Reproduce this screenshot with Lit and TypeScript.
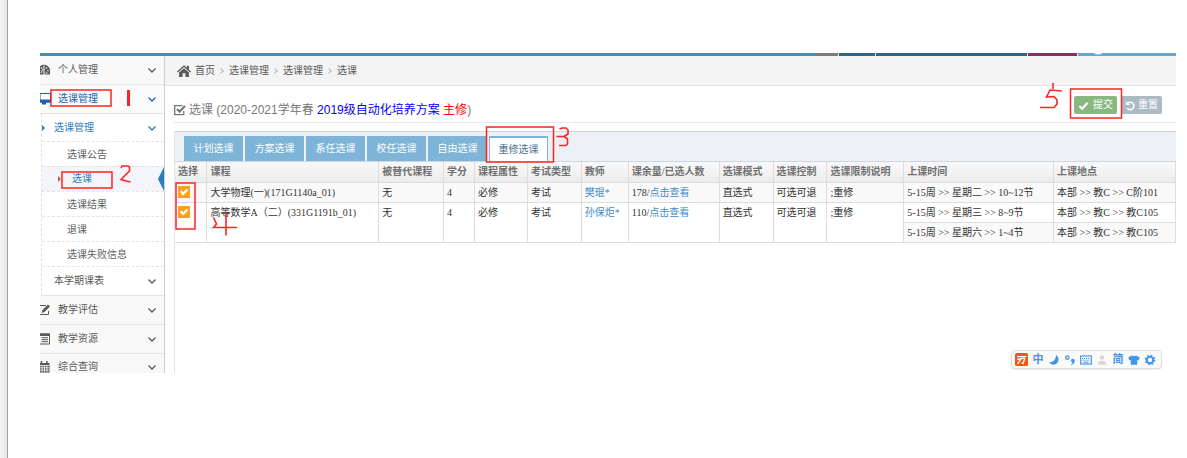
import { LitElement, html, svg, css } from "lit";
import { customElement, property, state } from "lit/decorators.js";
import { classMap } from "lit/directives/class-map.js";

const glyphs: Record<string, unknown> = {
  gauge: svg`<path d="M-2 10.500V6a6 6 0 0 1 12 1.500V10.500z" fill="currentColor"/><path d="M4 1.500V11" stroke="#f8f8f8" stroke-width="1"/><circle cx="6.500" cy="4" r=".8" fill="#f8f8f8"/><circle cx="8" cy="6.800" r=".8" fill="#f8f8f8"/><circle cx="1.500" cy="4" r=".8" fill="#f8f8f8"/><path d="M1 9 3 5" stroke="#f8f8f8"/><path d="M5.500 9h2" stroke="#f8f8f8"/>`,
  desktop: svg`<path d="M0 .5H10.500V9H0z" fill="#fff" stroke="currentColor"/><path d="M0 6.500H11V9.500H0zM2 9h4v2.500H2z" fill="currentColor"/>`,
  edit: svg`<path d="M0 1.500H6M0 10.500H8.500V7" fill="none" stroke="currentColor"/><path d="M1.500 9 2.500 6 8 .5 10 2.500 4.500 8z" fill="currentColor"/>`,
  list: svg`<path d="M0 1H9.500V11H0" fill="none" stroke="currentColor"/><path d="M0 .5H10V3H0z" fill="currentColor"/><path d="M1.500 4.700H8M1.500 6.700H8M1.500 8.700H8" stroke="currentColor"/>`,
  calendar: svg`<path d="M0 2H9.500V11.500H0z" fill="currentColor"/><path d="M0 4.500H9M0 6.800H9M0 9.100H9M2 4.500V11M4.500 4.500V11M7 4.500V11" stroke="#f8f8f8" stroke-width=".8"/><path d="M1.500 0V3.500M7 0V3.500" stroke="currentColor" stroke-width="1.500"/>`,
  down: svg`<path d="M2.500 4.500 6 8 9.500 4.500" fill="none" stroke="currentColor" stroke-width="1.300"/>`,
  home: svg`<path d="M0 6.500 6 1 8.500 3.300V1.500H10.200V4.800L12 6.500 11.200 7.300 6 2.600.8 7.300z" fill="currentColor"/><path d="M1.800 7.300 6 3.600 10.200 7.300V11.200H7.200V8H4.800V11.200H1.800z" fill="currentColor"/>`,
  checksq: svg`<path d="M9.800 7V10.600H.7V1.600H8.500" fill="none" stroke="currentColor" stroke-width="1.300"/><path d="M3 5 5.500 7.700 11 2" fill="none" stroke="currentColor" stroke-width="2.200"/>`,
  check: svg`<path d="M1.500 6.500 4.500 9.500 10.500 3" fill="none" stroke="currentColor" stroke-width="2.400"/>`,
  undo: svg`<path d="M3 3.500A4 4 0 1 1 2.500 9" fill="none" stroke="currentColor" stroke-width="1.700"/><path d="M1 1V5.500H5.500z" fill="currentColor"/>`,
  brand: svg`<rect width="12" height="12" rx="1.500" fill="#fb5412"/><path d="M2 3.300H10.500M2 6 9 4.500M5.500 5.500 2.500 10M9 4.800 7.500 9.800 6 9" fill="none" stroke="#fff" stroke-width="1.200"/>`,
  moon: svg`<path d="M8 1C8 5.500 5.500 8 1.200 8.500 3 11.200 7 11.400 9.200 9 11.400 6.500 10.800 3 8 1z" fill="currentColor"/>`,
  punct: svg`<circle cx="3.300" cy="3.500" r="1.700" fill="none" stroke="currentColor" stroke-width="1.300"/><path d="M6.800 6.500a1.900 1.900 0 1 1 3.900.5C10.500 9.200 9 10.500 7 11V9.900q1.500-.5 1.600-1.500Q7 8.300 6.800 6.500z" fill="currentColor"/>`,
  keyboard: svg`<rect x=".7" y="2" width="10.600" height="8" fill="none" stroke="currentColor" stroke-width="1.200"/><path d="M2 4.500h8M2.500 6.200h8" stroke="currentColor" stroke-dasharray="1.200 .8"/><path d="M3.500 8.200h5" stroke="currentColor"/>`,
  person: svg`<circle cx="6" cy="3.600" r="2.200" fill="#d5d5d5"/><path d="M1.700 10.800q0-4 4.300-4t4.300 4z" fill="#d5d5d5"/>`,
  shirt: svg`<path d="M4 1.500q2 1.500 4 0L11.800 3.500 10.500 6.500 9.200 6V10.800H2.800V6L1.500 6.500.2 3.500z" fill="currentColor"/>`,
  gear: svg`<circle cx="6" cy="6" r="3.200" fill="none" stroke="currentColor" stroke-width="2"/><circle cx="6" cy="6" r="4.500" fill="none" stroke="currentColor" stroke-width="1.600" stroke-dasharray="1.767 1.767"/>`,
};

const icon = (name: string, cls = "") =>
  html`<svg class="icon ${cls}" viewBox="0 0 12 12" aria-hidden="true">${glyphs[name]}</svg>`;

@customElement("side-menu")
class SideMenu extends LitElement {
  static styles = css`
    :host { display: block; border-right: 1px solid #ccc; background: #fff; color: #585858; }
    a { color: inherit; text-decoration: none; display: flex; align-items: center; }
    .label { flex: 1; white-space: nowrap; }
    .icon { width: 12px; height: 12px; flex: none; }
    .arrow { margin-right: 6px; }
    .top { height: 28px; background: #f8f8f8; border-bottom: 1px solid #e5e5e5; gap: 6px; }
    .open { color: #1963aa; background: #fafafa; }
    .last { box-sizing: border-box; height: 19px; padding-top: 7px; border: 0; align-items: flex-start; line-height: 12px; overflow: hidden; }
    .tree { margin-left: 1px; border-left: 1px dashed #d5e3ec; border-bottom: 1px solid #e5e5e5; }
    .sub { height: 27px; padding-left: 12px; }
    .current { color: #2b7dbc; }
    .leaf { box-sizing: border-box; height: 25px; padding: 2px 0 0 25px; border-top: 1px dashed #e4e4e4; color: #616161; }
    .sub.later { height: 28px; border-top: 1px dashed #e4e4e4; }
    .leaf.picked { background: #f3f5fa; color: #2b7dbc; padding: 0 0 0 16px; gap: 11px; }
    .mark { border: 3px solid transparent; border-left-color: #c86139; border-right: 0; }
    .flag { border: 12px solid transparent; border-right: 6px solid #2b7dbc; border-left: 0; }
    .node { width: 0; border: 3px solid transparent; border-left-color: #2b7dbc; border-right: 0; margin: 0 9px 0 -12px; }
  `;
  render() {
    const top = (name: string, text: string, cls = "") => html`
      <a href="#" class="top ${cls}">${icon(name)}<span class="label">${text}</span>${icon("down", "arrow")}</a>`;
    return html`<nav>
      ${top("gauge", "个人管理")} ${top("desktop", "选课管理", "open")}
      <div class="tree">
        <a href="#" class="sub current"><i class="node"></i><span class="label">选课管理</span>${icon("down", "arrow")}</a>
        <a href="#" class="leaf">选课公告</a>
        <a href="#" class="leaf picked"><i class="mark"></i><span class="label">选课</span><i class="flag"></i></a>
        <a href="#" class="leaf">选课结果</a>
        <a href="#" class="leaf">退课</a>
        <a href="#" class="leaf">选课失败信息</a>
        <a href="#" class="sub later"><span class="label">本学期课表</span>${icon("down", "arrow")}</a>
      </div>
      ${top("edit", "教学评估")} ${top("list", "教学资源")} ${top("calendar", "综合查询", "last")}
    </nav>`;
  }
}

interface Course {
  name: string; teacher: string; left: string;
  slots: [string, string][];
}

@customElement("course-table")
class CourseTable extends LitElement {
  static styles = css`
    :host { display: block; font-family: "Liberation Serif", "Noto Sans CJK SC", serif; color: #333; }
    table { width: 100%; table-layout: fixed; border-collapse: collapse; }
    th, td { border: 1px solid #ddd; padding: 2px 3px; height: 15px; line-height: 15px; text-align: left; vertical-align: top; white-space: nowrap; }
    th { border-top: 0; padding-bottom: 3px; color: #707070; background: linear-gradient(#f8f8f8, #ececec); font-weight: bold; }
    th:first-child, td.pick { border-left: 0; }
    .odd { background: #f9f9f9; }
    a { color: #428bca; text-decoration: none; }
    .pick input {
      appearance: none; display: block; width: 12px; height: 12px; margin: 1px 0 0;
      background: #f9a11b;
    }
    .pick input:checked::before {
      content: ""; display: block; width: 12px; height: 12px; background: #fff;
      clip-path: polygon(16% 50%, 30% 38%, 43% 52%, 72% 22%, 86% 36%, 43% 80%);
    }
  `;
  @property({ attribute: false }) courses: Course[] = [];
  private columns: [string, number][] = [
    ["选择", 32], ["课程", 172], ["被替代课程", 65], ["学分", 31], ["课程属性", 53],
    ["考试类型", 54], ["教师", 47], ["课余量/已选人数", 91], ["选课模式", 54],
    ["选课控制", 54], ["选课限制说明", 77], ["上课时间", 150], ["上课地点", 122],
  ];
  render() {
    const total = this.columns.reduce((n, c) => n + c[1], 0);
    return html`<table>
      <colgroup>${this.columns.map((c) => html`<col style="width:${(c[1] / total) * 100}%" />`)}</colgroup>
      <thead><tr>${this.columns.map((c) => html`<th scope="col">${c[0]}</th>`)}</tr></thead>
      <tbody>${this.courses.map((c, i) => {
        const n = c.slots.length;
        const odd = classMap({ odd: i % 2 === 0 });
        const cell = (v: unknown) => html`<td rowspan=${n}>${v}</td>`;
        return html`<tr class=${odd}>
            <td class="pick" rowspan=${n}><input type="checkbox" checked aria-label=${c.name} /></td>
            ${cell(c.name)}${cell("无")}${cell("4")}${cell("必修")}${cell("考试")}
            ${cell(html`<a href="#">${c.teacher}</a>`)}
            ${cell(html`${c.left}/<a href="#">点击查看</a>`)}
            ${cell("直选式")}${cell("可选可退")}${cell(";重修")}
            <td>${c.slots[0][0]}</td><td>${c.slots[0][1]}</td>
          </tr>
          ${c.slots.slice(1).map((s) => html`<tr class="odd"><td>${s[0]}</td><td>${s[1]}</td></tr>`)}`;
      })}</tbody>
    </table>`;
  }
}

@customElement("input-bar")
class InputBar extends LitElement {
  static styles = css`
    :host { display: flex; align-items: center; gap: 4px; height: 17px; padding: 0 5px 0 3px; background: #fafafa;
      border: 1px solid #ddd; border-radius: 4px; color: #3f96e6; box-shadow: 0 1px 1px #eee; }
    .icon { width: 12px; height: 12px; flex: none; }
    .logo { width: 13px; height: 13px; }
    .char { width: 12px; font-size: 11px; line-height: 17px; font-weight: bold; text-align: center; }
  `;
  render() {
    return html`${icon("brand", "logo")}<span class="char">中</span>${icon("moon")}${icon("punct")}${icon("keyboard")}
      ${icon("person")}<span class="char">简</span>${icon("shirt")}${icon("gear")}`;
  }
}

@customElement("app-root")
class AppRoot extends LitElement {
  static styles = css`
    :host { display: flex; position: relative; min-height: 100vh; background: #fff; overflow: hidden;
      font: 10px/14px "Liberation Sans", "Noto Sans CJK SC", sans-serif; color: #585858; }
    .edge { width: 7px; flex: none; background: linear-gradient(90deg, #f5f5f5, #e6e6e6); border-right: 1px solid #a0a0a0; }
    .page { flex: 1; min-width: 0; padding: 53px 11px 0 32px; }
    .icon { width: 12px; height: 12px; flex: none; }
    .strip { display: flex; justify-content: flex-end; gap: 1px; height: 3px; background: #438eb9; overflow: hidden; }
    .strip i { background: #2e6589; }
    .gray { width: 23px; }
    .s1 { width: 36px; box-shadow: 0 0 0 1px #d6e2ea; }
    .s2 { width: 151px; box-shadow: 0 0 0 1px #d6e2ea; }
    .s3 { width: 49px; box-shadow: 0 0 0 1px #d6e2ea; }
    .s4 { width: 98px; }
    .strip .gray { background: #7b7b7b; }
    .strip .s3 { background: #892e65; }
    .strip .s4 { background: radial-gradient(ellipse 5px 2px at 20px 0, #fff 40%, #62a8d1); }
    .frame { display: flex; position: relative; }
    side-menu { width: 124px; flex: none; }
    main { flex: 1; min-width: 0; display: flex; flex-direction: column; }
    .crumbs { display: flex; align-items: center; height: 29px; padding-left: 12px; background: #f4f4f4; border-bottom: 1px solid #e5e5e5; }
    .crumbs a { color: inherit; text-decoration: none; }
    .crumbs .home { width: 14px; height: 14px; margin-right: 4px; }
    .sep { width: 4px; height: 4px; margin: 0 6px 0 4px; border: solid #b2b6bf; border-width: 1px 1px 0 0; transform: rotate(45deg); box-sizing: border-box; }
    .head { display: flex; align-items: center; height: 36px; margin-left: 9px; border-bottom: 1px solid #e5e5e5; }
    h1 { flex: 1; display: flex; align-items: center; gap: 3px; margin: 0; padding-top: 12px; font-size: 12px; line-height: 18px; font-weight: normal; color: #777; white-space: nowrap; }
    .plan { color: #0000f5; }
    .major { color: #f00; }
    .actions { display: flex; gap: 4px; margin-right: 14px; padding-top: 2px; }
    button { font: inherit; border: 0; cursor: pointer; }
    .act { display: flex; align-items: center; gap: 4px; height: 18px; padding: 0 4px; color: #fff; border-radius: 2px; }
    .act .icon { width: 11px; height: 11px; }
    .save { background: #87b87f; }
    .reset { background: #abbac3; gap: 2px; }
    .panel { flex: 1; margin: 8px 0 0 9px; border-left: 1px solid #dde4ec; }
    .tabs { display: flex; gap: 2px; height: 25px; padding: 4px 0 0 9px; background: #edf1f6; border: solid #cdd7e3; border-width: 1px 0; }
    .tab { width: 59px; padding: 0; background: #7db4d8; color: #fff; }
    .tab.on { background: #fff; color: #4c6f8f; border: solid #7db4d8; border-width: 2px 1px 0; }
    input-bar { position: absolute; right: 14px; bottom: 4px; }
    .notes { position: absolute; left: 0; top: 0; width: 1187px; height: 458px; pointer-events: none; fill: none; stroke: #f22; stroke-width: 2; }
  `;
  @state() private active = 5;
  private tabs = ["计划选课", "方案选课", "系任选课", "校任选课", "自由选课", "重修选课"];
  private courses: Course[] = [
    { name: "大学物理(一)(171G1140a_01)", teacher: "樊琨*", left: "178",
      slots: [["5-15周 >> 星期二 >> 10~12节", "本部 >> 教C >> C阶101"]] },
    { name: "高等数学A（二）(331G1191b_01)", teacher: "孙保炬*", left: "110",
      slots: [["5-15周 >> 星期三 >> 8~9节", "本部 >> 教C >> 教C105"], ["5-15周 >> 星期六 >> 1~4节", "本部 >> 教C >> 教C105"]] },
  ];
  render() {
    return html`
      <div class="edge"></div>
      <div class="page">
        <div class="strip"><i class="gray"></i><i class="s1"></i><i class="s2"></i><i class="s3"></i><i class="s4"></i></div>
        <div class="frame">
          <side-menu></side-menu>
          <main>
            <nav class="crumbs">${icon("home", "home")}<a href="#">首页</a><i class="sep"></i><a href="#">选课管理</a><i class="sep"></i><a href="#">选课管理</a><i class="sep"></i><span>选课</span></nav>
            <div class="head">
              <h1>${icon("checksq")}<span>选课 (2020-2021学年春 <span class="plan">2019级自动化培养方案</span> <span class="major">主修</span>)</span></h1>
              <div class="actions">
                <button class="act save">${icon("check")}提交</button>
                <button class="act reset">${icon("undo")}重置</button>
              </div>
            </div>
            <section class="panel">
              <div class="tabs" role="tablist">${this.tabs.map((t, i) => html`
                <button role="tab" aria-selected=${i === this.active} class=${classMap({ tab: true, on: i === this.active })}
                  @click=${() => (this.active = i)}>${t}</button>`)}</div>
              <course-table .courses=${this.courses}></course-table>
            </section>
          </main>
          <input-bar></input-bar>
        </div>
      </div>
      <svg class="notes" viewBox="0 0 1187 458" aria-hidden="true">
        <g stroke-width="1.500">
          <rect x="51" y="90" width="60" height="16"/>
          <rect x="62" y="172" width="50" height="16"/>
          <rect x="176" y="183" width="19" height="46"/>
          <rect x="486.500" y="127" width="67" height="35"/>
          <rect x="1070.500" y="89" width="51" height="29"/>
        </g>
        <path d="M128.500 90V106" stroke-width="3"/>
        <path d="M121 168 122 166H128L129.500 167V171L121 179.500 126 181 130.500 182" stroke-width="1.600"/>
        <path d="M559.500 129 562 128H566L568 130V134L564 136.500H556.500M564 136.500 567.500 139V144L566 145.500H559" stroke-width="1.600"/>
        <path d="M213.500 217.500 216.500 224 213.500 227.500H237M226 213.500V235.500" stroke-width="1.600"/>
        <path d="M1053 83V89M1062 91 1050 90 1046.500 97 1054 96.500 1057 100V104L1054 107.500H1040" stroke-width="1.600"/>
      </svg>`;
  }
}
